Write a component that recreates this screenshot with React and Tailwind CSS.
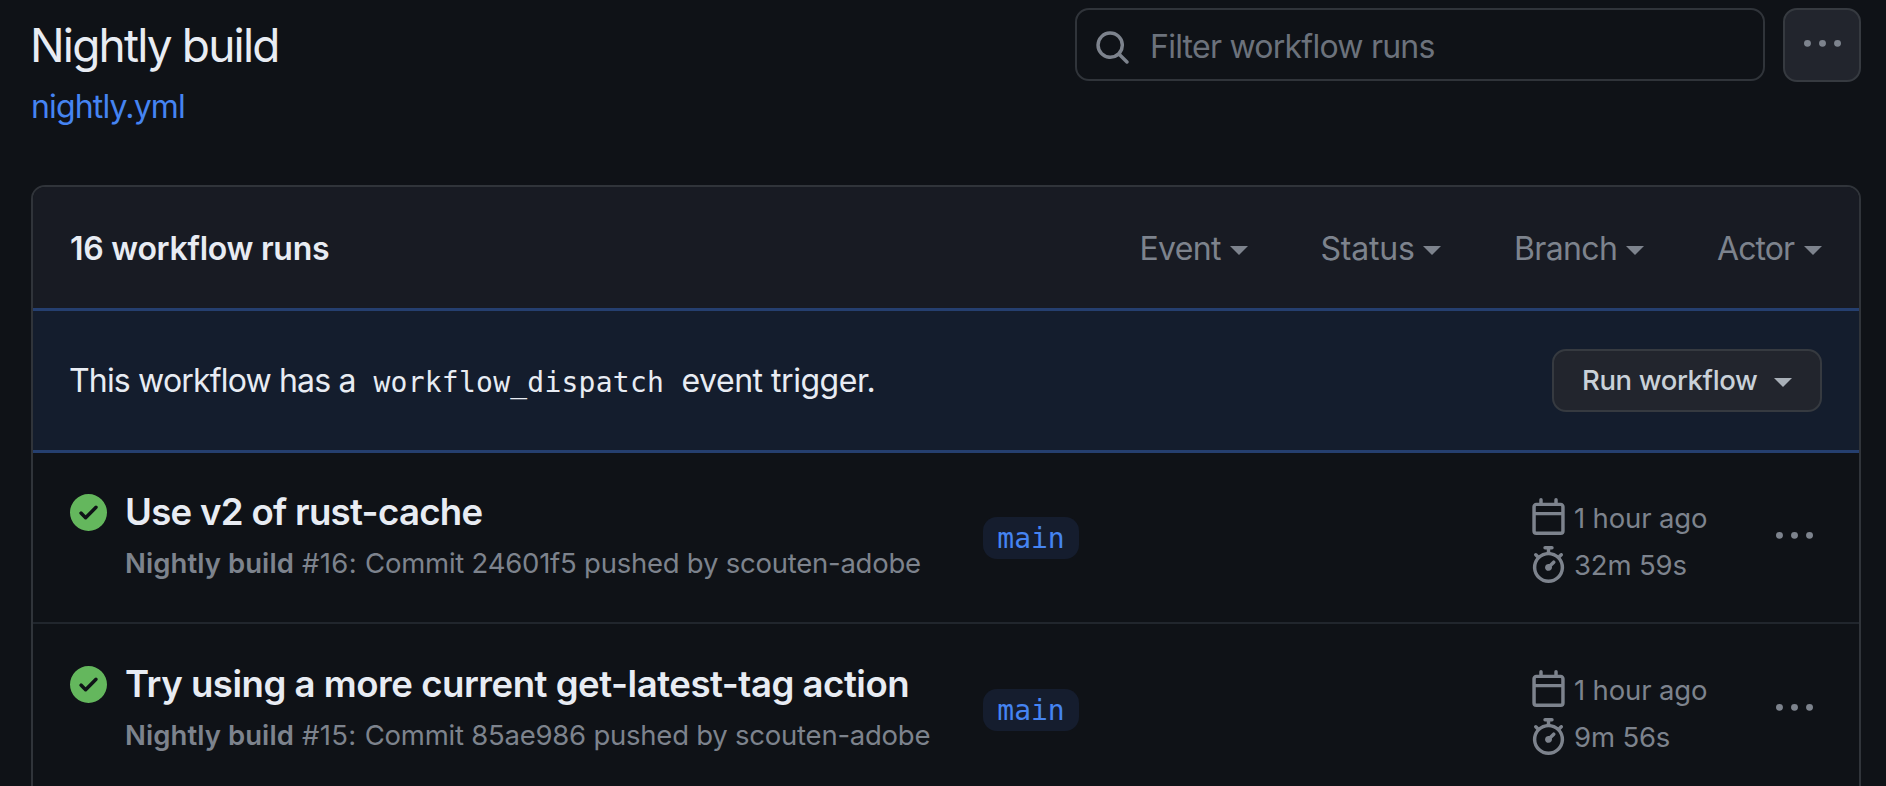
const SANS = "font-[Inter,sans-serif]";

function Icon({ className, children }) {
  return (
    <svg viewBox="0 0 16 16" fill="currentColor" aria-hidden="true" className={className}>
      {children}
    </svg>
  );
}

function Dots({ className }) {
  return (
    <Icon className={className}>
      <path d="M8 9a1.5 1.5 0 1 0 0-3 1.5 1.5 0 0 0 0 3ZM1.5 9a1.5 1.5 0 1 0 0-3 1.5 1.5 0 0 0 0 3Zm13 0a1.5 1.5 0 1 0 0-3 1.5 1.5 0 0 0 0 3Z" />
    </Icon>
  );
}

function Caret({ className }) {
  return (
    <svg viewBox="0 0 18 9" fill="currentColor" aria-hidden="true" className={`h-[9px] w-[18px] shrink-0 ${className}`}>
      <path d="M0 0h18L9 9Z" />
    </svg>
  );
}

const filters = [
  { label: "Event", style: "w-[108px] tracking-[-0.66px]" },
  { label: "Status", style: "w-[120.5px] tracking-[-0.2px]" },
  { label: "Branch", style: "w-[130px] tracking-[-0.63px]" },
  { label: "Actor", style: "w-[105px] tracking-[-0.9px]" },
];

const runs = [
  {
    title: "Use v2 of rust-cache",
    titleStyle: "tracking-[-0.695px]",
    number: "#16:",
    detail: "Commit 24601f5 pushed by scouten-adobe",
    branch: "main",
    when: "1 hour ago",
    duration: "32m 59s",
  },
  {
    title: "Try using a more current get-latest-tag action",
    titleStyle: "tracking-[-0.486px]",
    number: "#15:",
    detail: "Commit 85ae986 pushed by scouten-adobe",
    branch: "main",
    when: "1 hour ago",
    duration: "9m 56s",
  },
];

function Run({ run }) {
  return (
    <li className="flex h-[172px] shrink-0 border-b-2 border-[#21262d] pl-[37px] pt-px">
      <Icon className="mt-[41px] size-[37px] shrink-0 text-[#64b75d]">
        <path
          fillRule="evenodd"
          d="M8 16A8 8 0 1 0 8 0a8 8 0 0 0 0 16Zm3.78-9.72a.75.75 0 0 0-1.06-1.06L6.75 9.19 5.28 7.72a.75.75 0 0 0-1.06 1.06l2 2a.75.75 0 0 0 1.06 0Z"
        />
      </Icon>
      <div className="ml-[18px] w-[858px] shrink-0 whitespace-nowrap pt-[34px]">
        <h3 className={`text-[36.6px] font-semibold leading-[50px] text-[#e8ecf3] ${run.titleStyle}`}>{run.title}</h3>
        <p className="mt-[6px] text-[27.5px] leading-10 tracking-[-0.235px] text-[#7d838d]">
          <strong className="inline-block w-[177px] font-semibold tracking-[0.07px]">Nightly build</strong>
          <span className="tracking-[0.35px]">{run.number} </span>
          {run.detail}
        </p>
      </div>
      <div className="w-[547px] shrink-0 pt-16">
        <span className="flex h-[42px] w-24 items-center justify-center rounded-[14px] bg-[#151d2e] pt-px font-['DejaVu_Sans_Mono',monospace] text-[28px] leading-[42px] text-[#4584f2]">
          {run.branch}
        </span>
      </div>
      <div className="w-[246px] shrink-0 whitespace-nowrap pt-[45px] text-[27.5px] tracking-[-0.16px] text-[#7d838d]">
        <div className="flex h-[37px] items-center">
          <Icon className="size-[37px] shrink-0">
            <path d="M4.75 0a.75.75 0 0 1 .75.75V2h5V.75a.75.75 0 0 1 1.5 0V2h1.25c.966 0 1.75.784 1.75 1.75v10.5A1.75 1.75 0 0 1 13.25 16H2.75A1.75 1.75 0 0 1 1 14.25V3.75C1 2.784 1.784 2 2.75 2H4V.75A.75.75 0 0 1 4.75 0ZM2.5 7.5v6.75c0 .138.112.25.25.25h10.5a.25.25 0 0 0 .25-.25V7.5Zm10.75-4H2.75a.25.25 0 0 0-.25.25V6h11V3.75a.25.25 0 0 0-.25-.25Z" />
          </Icon>
          <span className="ml-[7px] pt-[3px] leading-[36px]">{run.when}</span>
        </div>
        <div className="mt-[11px] flex h-[37px] items-center">
          <Icon className="size-[37px] shrink-0">
            <path d="M5.75.75A.75.75 0 0 1 6.5 0h3a.75.75 0 0 1 0 1.5h-.75v1l-.001.041a6.724 6.724 0 0 1 3.464 1.435l.007-.006.75-.75a.749.749 0 0 1 1.275.326.749.749 0 0 1-.215.734l-.75.75-.006.007a6.75 6.75 0 1 1-10.548 0L2.72 5.03l-.75-.75a.751.751 0 0 1 .018-1.042.751.751 0 0 1 1.042-.018l.75.75.007.006A6.72 6.72 0 0 1 7.25 2.541V1.5H6.5a.75.75 0 0 1-.75-.75ZM8 14.5a5.25 5.25 0 1 0-.001-10.501A5.25 5.25 0 0 0 8 14.5Zm.389-6.7 1.33-1.33a.75.75 0 1 1 1.061 1.06L9.45 8.861A1.503 1.503 0 0 1 8 10.75a1.499 1.499 0 1 1 .389-2.95Z" />
          </Icon>
          <span className="ml-[7px] leading-[36px]">{run.duration}</span>
        </div>
      </div>
      <button className="mt-[65px] h-[37px] shrink-0 text-[#7d838d]">
        <Dots className="size-[37px]" />
      </button>
    </li>
  );
}

export default function App() {
  return (
    <div className={`flex h-[786px] w-[1886px] flex-col overflow-hidden bg-[#0f1217] pl-[31px] pr-[25px] ${SANS}`}>
      <header className="flex h-[185px] shrink-0 items-start justify-between">
        <div className="pt-[17px]">
          <h1 className="-ml-px h-14 whitespace-nowrap text-[46px] leading-14 tracking-[-1.82px] text-[#e8ecf3]">Nightly build</h1>
          <a className="mt-[14px] block text-[32px] leading-10 tracking-[-0.84px] text-[#4584f2]">nightly.yml</a>
        </div>
        <div className="flex gap-[18px] pt-2">
          <div className="flex h-[73px] w-[690px] items-center rounded-[14px] border-2 border-[#30343a] pl-[17px]">
            <Icon className="mt-[6px] size-[37px] shrink-0 text-[#7d838d]">
              <path d="M10.68 11.74a6 6 0 0 1-7.922-8.982 6 6 0 0 1 8.982 7.922l3.04 3.04a.749.749 0 0 1-.326 1.275.749.749 0 0 1-.734-.215ZM11.5 7a4.499 4.499 0 1 0-8.997 0A4.499 4.499 0 0 0 11.5 7Z" />
            </Icon>
            <span className="ml-[19px] pt-[5px] text-[32px] leading-10 tracking-[-0.757px] text-[#6c727c]">Filter workflow runs</span>
          </div>
          <button className="flex h-[74px] w-[78px] justify-center rounded-[14px] border-2 border-[#363a40] bg-[#22252d] pt-4 text-[#7d838d]">
            <Dots className="size-[37px]" />
          </button>
        </div>
      </header>

      <section className="h-[700px] shrink-0 overflow-hidden rounded-[14px] border-2 border-[#30343a]">
        <div className="flex h-[121px] items-center justify-between bg-[#181b23] pl-[37px] pr-[37px] pt-[2px]">
          <h2 className="text-[32px] font-semibold leading-10 tracking-[-0.264px] text-[#e8ecf3]">16 workflow runs</h2>
          <div className="flex gap-[73px] text-[32px] leading-10 text-[#7d838d]">
            {filters.map((f) => (
              <button key={f.label} className={`flex items-center justify-between ${f.style}`}>
                {f.label}
                <Caret className="mt-[3px]" />
              </button>
            ))}
          </div>
        </div>

        <div className="flex h-[145px] items-center justify-between border-y-[3px] border-[#253f6f] bg-[#141d2d] pl-9 pr-[37px] text-[#e8ecf3]">
          <p className="flex whitespace-nowrap pt-[3px] text-[32px] leading-10">
            <span className="w-[304.5px] tracking-[-0.822px]">This workflow has a</span>
            <code className="w-[308px] pt-[2px] font-['DejaVu_Sans_Mono',monospace] text-[28px] tracking-[0.236px]">workflow_dispatch</code>
            <span className="tracking-[-0.472px]">event trigger.</span>
          </p>
          <button className="flex h-[63px] w-[270px] items-center justify-between rounded-[14px] border-2 border-[#363a40] bg-[#22252d] pl-[28px] pr-[28px] text-[27.5px] font-medium tracking-[-0.377px] text-[#c9d1d9]">
            Run workflow
            <Caret className="mt-[4px] text-[#a9b0b8]" />
          </button>
        </div>

        <ul className="-mt-px flex flex-col">
          {runs.map((run) => (
            <Run key={run.title} run={run} />
          ))}
        </ul>
      </section>
    </div>
  );
}
